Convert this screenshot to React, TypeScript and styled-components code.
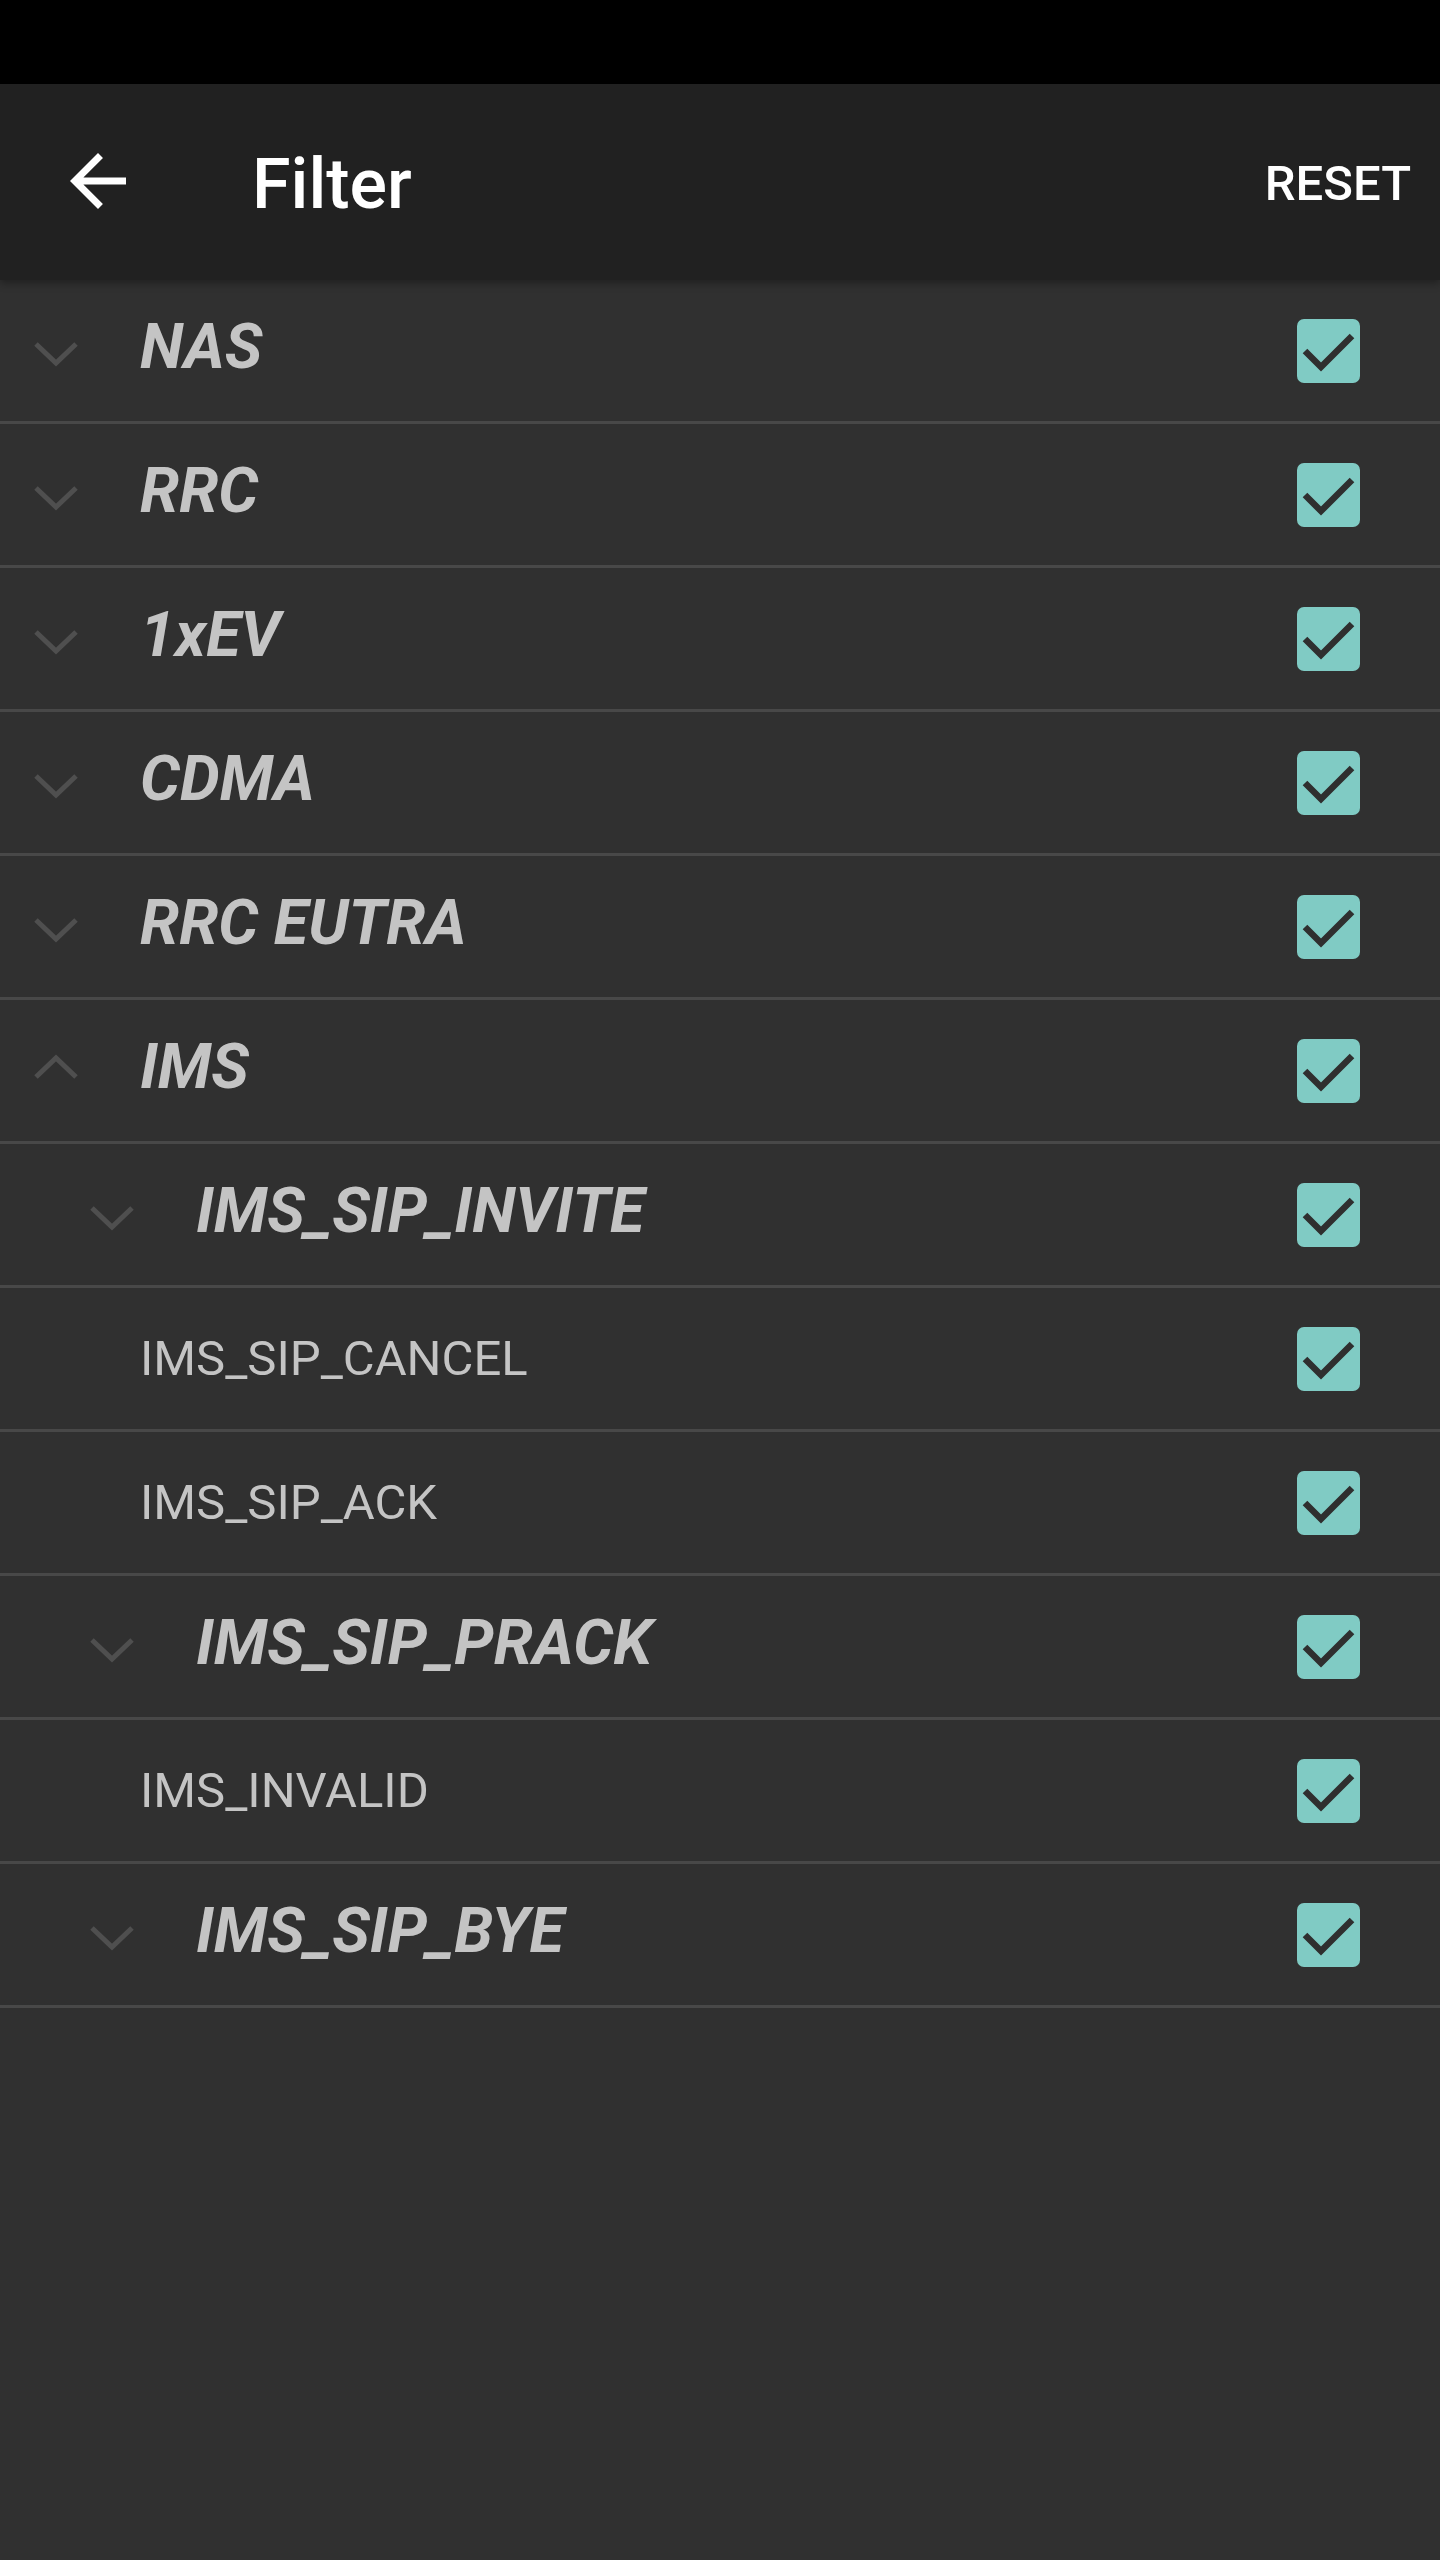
import React from "react";
import styled, { createGlobalStyle } from "styled-components";

const Global = createGlobalStyle`
  html, body { margin: 0; padding: 0; background: #303030; }
  body { font-family: Roboto, "Noto Sans", "Liberation Sans", sans-serif; }
  * { box-sizing: border-box; }
`;

const Screen = styled.div`
  width: 1440px;
  min-height: 2560px;
  background: #303030;
  display: flex;
  flex-direction: column;
`;

const StatusBar = styled.div`
  height: 84px;
  background: #000;
`;

const Toolbar = styled.header`
  height: 196px;
  background: #212121;
  display: flex;
  align-items: center;
  padding: 0 29px 0 56px;
  box-shadow: 0 3px 8px rgba(0, 0, 0, 0.35);
  position: relative;
  z-index: 1;
`;

const BackButton = styled.button`
  width: 84px;
  height: 84px;
  padding: 0;
  border: none;
  background: transparent;
  display: flex;
  align-items: center;
  justify-content: center;
  margin-top: -2px;
`;

const Title = styled.h1`
  margin: 4px 0 0 112px;
  flex: 1;
  font-size: 70px;
  font-weight: 500;
  color: #fff;
  letter-spacing: 0;
`;

const ResetButton = styled.button`
  border: none;
  background: transparent;
  color: #fff;
  font-family: Roboto, sans-serif;
  font-weight: 500;
  font-size: 49px;
  padding: 0;
  margin-top: 3px;
`;

const List = styled.div`
  display: flex;
  flex-direction: column;
`;

const Row = styled.div<{ $level: number }>`
  height: 144px;
  border-bottom: 3px solid #484848;
  display: flex;
  align-items: center;
  padding-left: ${(p) => p.$level * 56}px;
  padding-right: 80px;
`;

const ChevronSlot = styled.div`
  width: 140px;
  flex: none;
  display: flex;
  align-items: center;
  padding-left: 34px;
`;

const GroupLabel = styled.span`
  flex: 1;
  font-size: 63px;
  font-weight: 700;
  font-style: italic;
  color: #c4c4c4;
  padding-bottom: 8px;
  white-space: nowrap;
`;

const LeafLabel = styled.span`
  flex: 1;
  font-size: 49px;
  font-weight: 400;
  color: #c4c4c4;
  white-space: nowrap;
`;

const CheckBox = styled.div`
  width: 63px;
  height: 64px;
  border-radius: 7px;
  background: #80cbc4;
  flex: none;
  display: flex;
`;

const Chevron = ({ up }: { up?: boolean }) => (
  <svg width="44" height="26" viewBox="0 0 44 26" style={{ marginTop: up ? -8 : 6 }}>
    <polyline
      points={up ? "2,23 22,4 42,23" : "2,3 22,22 42,3"}
      fill="none"
      stroke="#4f4f4f"
      strokeWidth="5"
    />
  </svg>
);

const Check = () => (
  <CheckBox>
    <svg width="63" height="64" viewBox="0 0 63 64">
      <polyline points="8,32 24,48 55,17" fill="none" stroke="#2f2f2f" strokeWidth="6.5" />
    </svg>
  </CheckBox>
);

type Item = { label: string; kind: "group" | "leaf"; level: number; open?: boolean };

const items: Item[] = [
  { label: "NAS", kind: "group", level: 0 },
  { label: "RRC", kind: "group", level: 0 },
  { label: "1xEV", kind: "group", level: 0 },
  { label: "CDMA", kind: "group", level: 0 },
  { label: "RRC EUTRA", kind: "group", level: 0 },
  { label: "IMS", kind: "group", level: 0, open: true },
  { label: "IMS_SIP_INVITE", kind: "group", level: 1 },
  { label: "IMS_SIP_CANCEL", kind: "leaf", level: 0 },
  { label: "IMS_SIP_ACK", kind: "leaf", level: 0 },
  { label: "IMS_SIP_PRACK", kind: "group", level: 1 },
  { label: "IMS_INVALID", kind: "leaf", level: 0 },
  { label: "IMS_SIP_BYE", kind: "group", level: 1 },
];

export default function App() {
  return (
    <Screen>
      <Global />
      <StatusBar />
      <Toolbar>
        <BackButton aria-label="back">
          <svg width="84" height="84" viewBox="0 0 24 24">
            <path d="M20 11H7.83l5.59-5.59L12 4l-8 8 8 8 1.41-1.41L7.83 13H20v-2z" fill="#fff" />
          </svg>
        </BackButton>
        <Title>Filter</Title>
        <ResetButton>RESET</ResetButton>
      </Toolbar>
      <List>
        {items.map((it) => (
          <Row key={it.label} $level={it.level}>
            <ChevronSlot>{it.kind === "group" && <Chevron up={it.open} />}</ChevronSlot>
            {it.kind === "group" ? (
              <GroupLabel>{it.label}</GroupLabel>
            ) : (
              <LeafLabel>{it.label}</LeafLabel>
            )}
            <Check />
          </Row>
        ))}
      </List>
    </Screen>
  );
}
